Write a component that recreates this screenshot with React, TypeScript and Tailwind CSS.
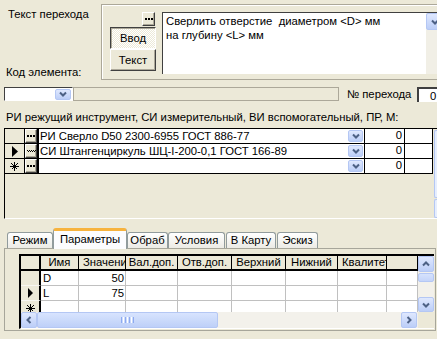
import React from "react";

const raised =
  "border border-t-white border-l-white border-r-[#404040] border-b-[#404040] shadow-[inset_-1px_-1px_0_#ACA899]";
const pressed =
  "border border-t-[#404040] border-l-[#404040] border-r-white border-b-white shadow-[inset_1px_1px_0_#ACA899]";

function Chev({ dir }: { dir: "down" | "up" | "left" | "right" }) {
  const d =
    dir === "down"
      ? "M1 1.5L4 4.5L7 1.5"
      : dir === "up"
      ? "M1 4.5L4 1.5L7 4.5"
      : dir === "left"
      ? "M4.5 1L1.5 4L4.5 7"
      : "M1.5 1L4.5 4L1.5 7";
  const horiz = dir === "down" || dir === "up";
  return (
    <svg width={horiz ? 8 : 6} height={horiz ? 6 : 8} viewBox={horiz ? "0 0 8 6" : "0 0 6 8"}>
      <path d={d} fill="none" stroke="#4D6185" strokeWidth="2" />
    </svg>
  );
}

function XPBtn({ dir, className }: { dir: "down" | "up" | "left" | "right"; className: string }) {
  return (
    <div
      className={`flex shrink-0 items-center justify-center rounded-[2px] border border-[#B4C7F4] bg-linear-to-b from-[#DFE8FE] to-[#BCCEF7] ${className}`}
    >
      <Chev dir={dir} />
    </div>
  );
}

function Dots() {
  return (
    <svg width="8" height="2" viewBox="0 0 8 2" shapeRendering="crispEdges">
      <rect x="0" y="0" width="2" height="2" fill="#000" />
      <rect x="3" y="0" width="2" height="2" fill="#000" />
      <rect x="6" y="0" width="2" height="2" fill="#000" />
    </svg>
  );
}

function DotsFocus() {
  return (
    <svg width="9" height="3" viewBox="0 0 9 3" shapeRendering="crispEdges">
      <path d="M0 0h1v1h-1zM1 1h1v1h-1zM2 0h1v1h-1zM3 1h1v1h-1zM4 0h1v1h-1zM5 1h1v1h-1zM6 0h1v1h-1zM7 1h1v1h-1zM8 0h1v1h-1z" fill="#000" />
    </svg>
  );
}

function Tri({ w, h }: { w: number; h: number }) {
  return (
    <svg width={w} height={h} viewBox={`0 0 ${w} ${h}`}>
      <polygon points={`0,0 ${w},${h / 2} 0,${h}`} fill="#000" />
    </svg>
  );
}

function Asterisk() {
  return (
    <svg width="9" height="9" viewBox="0 0 9 9" shapeRendering="crispEdges">
      <path d="M0 4.5H9M4.5 0V9M1.5 1.5L7.5 7.5M7.5 1.5L1.5 7.5" stroke="#000" strokeWidth="1" fill="none" />
    </svg>
  );
}

const toolRows = [
  { mark: "", text: "РИ Сверло D50 2300-6955 ГОСТ 886-77", focus: false },
  { mark: "tri", text: "СИ Штангенциркуль ШЦ-I-200-0,1 ГОСТ 166-89", focus: true },
  { mark: "ast", text: "", focus: false },
];

const paramCols = [
  { name: "Имя", w: "w-[38px]", align: "justify-center" },
  { name: "Значение", w: "w-[47px]", align: "justify-start pl-[4px]" },
  { name: "Вал.доп.", w: "w-[52px]", align: "justify-center" },
  { name: "Отв.доп.", w: "w-[54px]", align: "justify-center" },
  { name: "Верхний", w: "w-[54px]", align: "justify-center" },
  { name: "Нижний", w: "w-[52px]", align: "justify-center" },
  { name: "Квалитет", w: "w-[49px]", align: "justify-start pl-[4px]" },
  { name: "", w: "w-[31px]", align: "justify-end pr-[1px]" },
];

const paramRows = [
  { mark: "", name: "D", val: "50" },
  { mark: "tri", name: "L", val: "75" },
  { mark: "ast", name: "", val: "" },
];

const tabs = ["Режим", "Параметры", "Обраб", "Условия", "В Карту", "Эскиз"];
const tabW: Record<string, string> = {
  Режим: "w-[46px]",
  Параметры: "w-[74px]",
  Обраб: "w-[41px]",
  Условия: "w-[57px]",
  "В Карту": "w-[50px] ml-[1px]",
  Эскиз: "w-[41px] ml-[1px]",
};

export default function App() {
  return (
    <div className="flex h-[339px] w-[437px] flex-col overflow-hidden bg-[#ECE9D8] font-['Liberation_Sans',Arial,sans-serif] text-[11.3px] leading-[13px] text-black">
      {/* Row A: transition text */}
      <div className="flex h-[80px] shrink-0">
        <div className="flex w-[101px] shrink-0 flex-col">
          <div className="pl-[8px] pt-[8px] whitespace-nowrap">Текст перехода</div>
          <div className="mt-[45px] pl-[6px] whitespace-nowrap">Код элемента:</div>
        </div>
        <div className="mt-[4px] flex h-[76px] min-w-0 flex-1 overflow-hidden border-t border-l border-b border-[#ACA899] pl-[8px] pt-[7px] shadow-[inset_1px_1px_0_#fff]">
          <div className="flex w-[46px] shrink-0 flex-col items-end">
            <div className={`mr-[1px] flex h-[14px] w-[13px] items-center justify-center bg-[#ECE9D8] ${raised}`}>
              <Dots />
            </div>
            <div
              className={`mt-[1px] flex h-[22px] w-[46px] items-center justify-center bg-[image:repeating-conic-gradient(#ffffff_0_25%,#ECE9D8_0_50%)] bg-[length:2px_2px] pt-[1px] ${pressed}`}
            >
              Ввод
            </div>
            <div className={`flex h-[22px] w-[46px] items-center justify-center bg-[#ECE9D8] ${raised}`}>Текст</div>
          </div>
          <div className="ml-[6px] flex h-[62px] shrink-0 border-t border-l border-[#404040]">
            <div className="w-[263px] bg-white pl-[3px] pt-[1px] leading-[14px] whitespace-pre">
              {"Сверлить отверстие  диаметром <D> мм\nна глубину <L> мм"}
            </div>
            <div className="flex w-[17px] flex-col bg-[#F1EFE6]">
              <XPBtn dir="down" className="h-[17px] w-[17px]" />
            </div>
          </div>
        </div>
      </div>

      {/* Row B: element code */}
      <div className="mt-[7px] flex h-[15px] shrink-0">
        <div className="ml-[4px] flex h-[14px] w-[69px] shrink-0 items-center justify-end border border-t-[#404040] border-l-[#404040] border-r-white border-b-white bg-white pr-[1px]">
          <XPBtn dir="down" className="h-[11px] w-[16px]" />
        </div>
        <div className="h-[14px] w-[266px] shrink-0 border border-[#ACA899]"></div>
        <div className="ml-[8px] w-[70px] shrink-0 pt-[1px] whitespace-nowrap">№ перехода</div>
        <div className="h-[15px] w-[30px] shrink-0 border-t-2 border-l-2 border-[#404040] bg-white pl-[11px] pt-[1px]">0</div>
      </div>

      <div className="mt-[9px] shrink-0 pl-[6px] whitespace-nowrap">
        РИ режущий инструмент, СИ измерительный, ВИ вспомогательный, ПР, М:
      </div>

      {/* Tools grid */}
      <div className="ml-[4px] mt-[4px] flex h-[91px] w-[433px] shrink-0 border-t border-l border-b border-t-black border-l-black border-b-white">
        <div className="flex w-[428px] shrink-0 flex-col">
          {toolRows.map((r, i) => (
            <div key={i} className="flex h-[15px] border-b border-black">
              <div className="flex w-[20px] shrink-0 items-center justify-center border-r border-black bg-[#ECE9D8]">
                {r.mark === "tri" && <Tri w={6} h={11} />}
                {r.mark === "ast" && <Asterisk />}
              </div>
              <div className="w-[14px] shrink-0 border-r-2 border-black">
                <div className={`flex h-full w-full items-center justify-center bg-[#ECE9D8] ${raised}`}>
                  {r.focus ? <DotsFocus /> : <Dots />}
                </div>
              </div>
              <div className="flex w-[326px] shrink-0 items-center border-r border-black bg-white pl-[1px] pr-[1px]">
                <span className="flex-1 whitespace-nowrap">{r.text}</span>
                <XPBtn dir="down" className="h-[12px] w-[15px]" />
              </div>
              <div className="w-[40px] shrink-0 border-r border-black bg-white pr-[2px] text-right">0</div>
              <div className="w-[28px] shrink-0 border-r border-black bg-white"></div>
            </div>
          ))}
        </div>
        <div className="ml-[1px] flex w-[4px] shrink-0 flex-col pt-[1px]">
          <div className="h-[68px] rounded-l-[2px] border-t border-l border-b border-[#B4C7F4] bg-[#E6EEFD]"></div>
          <div className="mt-[1px] h-[19px] rounded-l-[2px] border-t border-l border-b border-[#B4C7F4] bg-[#E6EEFD]"></div>
        </div>
      </div>

      {/* Tabs */}
      <div className="mt-[9px] flex h-[20px] shrink-0 items-end pl-[7px]">
        {tabs.map((t) =>
          t === "Параметры" ? (
            <div
              key={t}
              className={`relative z-10 -mb-px flex h-[21px] shrink-0 items-center justify-center rounded-t-[3px] border-x border-t-[3px] border-x-[#919B9C] border-t-[#F7B33E] bg-[#FCFCFE] pb-[1px] ${tabW[t]}`}
            >
              {t}
            </div>
          ) : (
            <div
              key={t}
              className={`flex h-[16px] shrink-0 items-center justify-center rounded-t-[3px] border border-b-0 border-[#919B9C] bg-linear-to-b from-white to-[#ECEBE5] ${tabW[t]}`}
            >
              {t}
            </div>
          )
        )}
      </div>
      <div className="ml-[4px] h-[83px] w-[432px] shrink-0 border border-[#A7A69A] pl-[14px] pt-[5px]">
        <div className="flex h-[75px] w-[415px] flex-col border-t-2 border-l-2 border-b border-t-black border-l-black border-b-white">
          <div className="flex h-[56px]">
            <div className="flex w-[397px] shrink-0 flex-col overflow-hidden">
              <div className="flex h-[15px] shrink-0 border-b-2 border-black bg-[#ECE9D8]">
                <div className="w-[20px] shrink-0 border-r-2 border-black"></div>
                {paramCols.map((c, j) => (
                  <div
                    key={j}
                    className={`flex shrink-0 items-center overflow-hidden whitespace-nowrap border-r border-black ${c.w} ${c.align}`}
                  >
                    {c.name}
                  </div>
                ))}
              </div>
              {paramRows.map((r, i) => (
                <div key={i} className="flex h-[15px] shrink-0">
                  <div className="flex w-[20px] shrink-0 items-center justify-center border-r-2 border-b border-r-black border-b-[#F8F7F2] bg-[#ECE9D8]">
                    {r.mark === "tri" && <Tri w={5} h={10} />}
                    {r.mark === "ast" && <Asterisk />}
                  </div>
                  {paramCols.map((c, j) => (
                    <div
                      key={j}
                      className={`flex shrink-0 items-center overflow-hidden whitespace-nowrap border-r border-b border-[#C0C0C0] bg-white ${c.w} ${
                        j === 1 ? "justify-end pr-[1px]" : "justify-start pl-[2px]"
                      }`}
                    >
                      {j === 0 ? r.name : j === 1 ? r.val : ""}
                    </div>
                  ))}
                </div>
              ))}
            </div>
            <div className="flex w-[16px] shrink-0 flex-col bg-[#F3F1EB]">
              <XPBtn dir="up" className="h-[16px] w-[16px]" />
              <div className="mt-[1px] h-[9px] w-[16px] rounded-[2px] border border-[#B4C7F4] bg-linear-to-b from-[#D6E2FD] to-[#C4D4F9]"></div>
              <div className="flex-1"></div>
              <XPBtn dir="down" className="h-[15px] w-[16px]" />
            </div>
          </div>
          <div className="flex h-[16px]">
            <div className="flex w-[397px] shrink-0 bg-[#F3F1EB]">
              <XPBtn dir="left" className="h-[16px] w-[16px]" />
              <div className="flex h-[16px] w-[181px] shrink-0 items-center justify-center gap-[1px] rounded-[2px] border border-[#B4C7F4] bg-linear-to-b from-[#D8E4FE] to-[#BED0F8]">
                <div className="h-[6px] w-[1px] bg-[#8DAAF0]"></div>
                <div className="h-[6px] w-[1px] bg-white"></div>
                <div className="h-[6px] w-[1px] bg-[#8DAAF0]"></div>
                <div className="h-[6px] w-[1px] bg-white"></div>
                <div className="h-[6px] w-[1px] bg-[#8DAAF0]"></div>
                <div className="h-[6px] w-[1px] bg-white"></div>
                <div className="h-[6px] w-[1px] bg-[#8DAAF0]"></div>
              </div>
              <div className="flex-1"></div>
              <XPBtn dir="right" className="mr-[1px] h-[16px] w-[16px]" />
            </div>
            <div className="w-[16px] shrink-0 bg-[#ECE9D8]"></div>
          </div>
        </div>
      </div>
    </div>
  );
}
